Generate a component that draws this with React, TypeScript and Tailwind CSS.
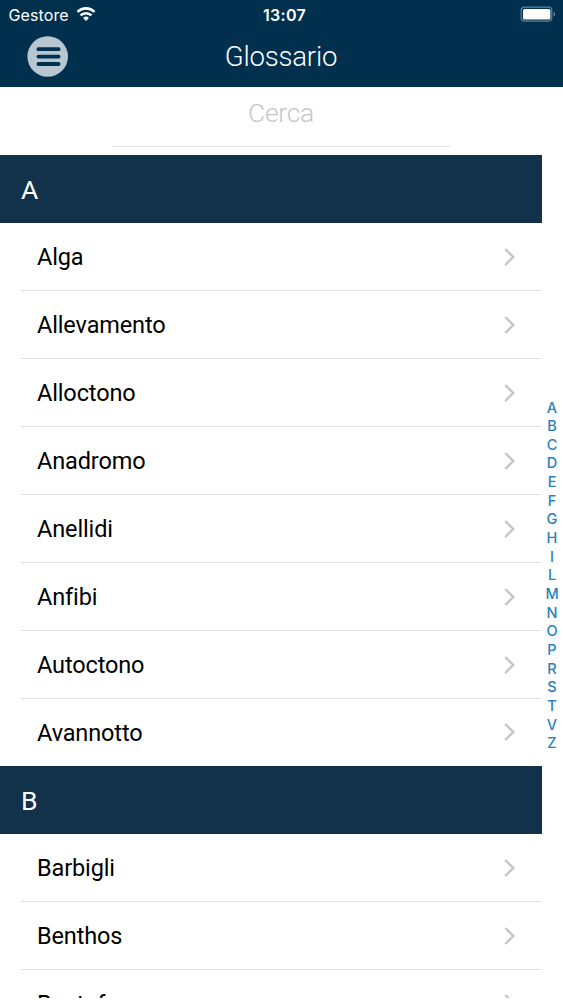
const sections = [
  {
    letter: 'A',
    terms: ['Alga', 'Allevamento', 'Alloctono', 'Anadromo', 'Anellidi', 'Anfibi', 'Autoctono', 'Avannotto'],
  },
  { letter: 'B', terms: ['Barbigli', 'Benthos', 'Bentofago'] },
]

const letters = 'ABCDEFGHILMNOPRSTVZ'.split('')

function WifiIcon() {
  return (
    <svg width="20" height="15" viewBox="0 0 20 15" fill="none" stroke="#fff" strokeWidth="2.7">
      <path d="M1.5 4.9a12.2 12.2 0 0 1 17 0" />
      <path d="M4.6 8.4a7.8 7.8 0 0 1 10.8 0" />
      <path d="M10 14l-2.9-3a4.2 4.2 0 0 1 5.8 0z" fill="#fff" stroke="none" />
    </svg>
  )
}

function BatteryIcon() {
  return (
    <svg width="36" height="17" viewBox="0 0 36 17" fill="none">
      <rect x="1.2" y="1.2" width="30.6" height="14" rx="3.4" stroke="#5d859f" strokeWidth="1.2" />
      <rect x="3" y="3" width="27.4" height="10.4" rx="1.5" fill="#fff" />
      <path d="M33.7 5.8c1.8.8 1.8 4 0 4.8z" fill="#7c9caf" />
    </svg>
  )
}

function Header() {
  return (
    <header className="h-[87px] bg-[#01304e] text-white">
      <div className="grid h-[28px] grid-cols-3 items-center">
        <div className="flex items-center pl-[8.5px]">
          <span className="w-[67.5px] pt-px font-['Inter'] text-[16px] leading-5 tracking-[0.1px]">Gestore</span>
          <WifiIcon />
        </div>
        <span className="pt-px pl-[6px] text-center font-['Inter'] text-[16px] leading-5 font-semibold tracking-[0.3px]">
          13:07
        </span>
        <div className="flex justify-end pr-[7px]">
          <BatteryIcon />
        </div>
      </div>
      <div className="grid h-[57px] grid-cols-[68px_1fr_68px] items-center">
        <button aria-label="Menu" className="ml-[27px] size-[41px]">
          <svg width="41" height="41" viewBox="0 0 41 41">
            <circle cx="20.7" cy="20.5" r="20.3" fill="#b7c7d1" />
            <path
              d="M11.4 13.2h20.2M11.4 20.6h20.2M11.4 28h20.2"
              stroke="#01304e"
              strokeWidth="3.8"
              strokeLinecap="round"
            />
          </svg>
        </button>
        <h1 className="-ml-px text-center text-[27.6px] leading-8 font-light tracking-[-0.2px]">Glossario</h1>
      </div>
    </header>
  )
}

function Row({ term }: { term: string }) {
  return (
    <li className="ml-[21px] flex h-[68px] items-center justify-between border-b border-[#e0e0e2] pr-[25px] pl-4 last:h-[67px] last:border-transparent">
      <span className="pt-px text-[23.5px] leading-8 tracking-[-0.13px]">{term}</span>
      <svg width="14" height="18" viewBox="0 0 14 18" fill="none" stroke="#c5c5c9" strokeWidth="2.4">
        <path d="M2.3 1l8 8-8 8" />
      </svg>
    </li>
  )
}

export default function App() {
  return (
    <div className="h-[1000px] overflow-hidden bg-white pb-0.5 font-['Roboto',sans-serif] text-black">
      <div className="relative h-[998px] overflow-hidden">
        <Header />
        <div className="flex h-[68px] justify-center">
          <div className="mr-px h-[60px] w-[338px] border-b border-[#e2e2e4] pt-[10px] text-center text-[26.5px] leading-8 font-light tracking-[-0.3px] text-[#c6c6ca]">
            Cerca
          </div>
        </div>
        <main className="mr-[21px]">
          {sections.map(({ letter, terms }) => (
            <section key={letter}>
              <h2 className="flex h-[68px] items-center bg-[#12314b] pt-px pl-[21px] text-[26.5px] leading-8 text-white">
                {letter}
              </h2>
              <ul>
                {terms.map((term) => (
                  <Row key={term} term={term} />
                ))}
              </ul>
            </section>
          ))}
        </main>
        <nav className="absolute top-[398.5px] right-0 flex w-[22px] flex-col items-center font-['Inter'] text-[14.5px] font-medium text-[#2783bd]">
          {letters.map((letter) => (
            <span key={letter} className="h-[18.67px] leading-[18.67px]">
              {letter}
            </span>
          ))}
        </nav>
      </div>
    </div>
  )
}
